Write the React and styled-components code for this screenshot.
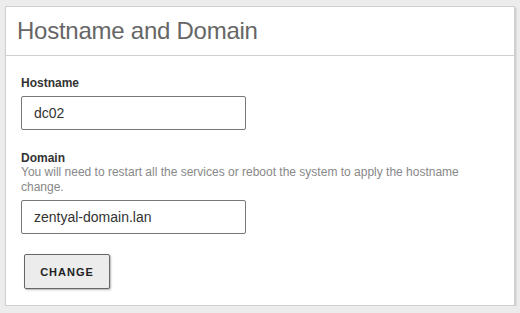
import React from 'react';
import styled, { createGlobalStyle } from 'styled-components';

const GlobalStyle = createGlobalStyle`
  html, body {
    margin: 0;
    padding: 0;
    background: #ececec;
    font-family: "Liberation Sans", Arial, sans-serif;
  }
`;

const Page = styled.div`
  padding: 6px 5px 0 5px;
`;

const Panel = styled.section`
  background: #fff;
  border: 1px solid #cfcfcf;
  box-shadow: 1px 2px 2px rgba(0, 0, 0, 0.18);
  width: 508px;
`;

const Header = styled.header`
  height: 48px;
  display: flex;
  align-items: center;
  padding: 0 11px;
  border-bottom: 1px solid #cfcfcf;
`;

const Title = styled.h2`
  margin: 0;
  font-weight: 400;
  font-size: 24px;
  letter-spacing: -0.25px;
  color: #666;
`;

const Body = styled.div`
  padding: 20px 15px 16px;
  display: flex;
  flex-direction: column;
`;

const Field = styled.div`
  display: flex;
  flex-direction: column;
  margin-bottom: ${({ $gap }) => $gap}px;
`;

const Label = styled.label`
  font-size: 12px;
  font-weight: 700;
  color: #333;
  line-height: 14px;
`;

const Help = styled.p`
  margin: 0;
  font-size: 12px;
  color: #888;
  line-height: 15px;
  max-width: 460px;
`;

const Input = styled.input`
  box-sizing: border-box;
  width: 225px;
  height: 34px;
  margin-top: ${({ $top }) => $top}px;
  border: 1px solid #777;
  border-radius: 2px;
  padding: 0 12px;
  font-family: inherit;
  font-size: 14px;
  color: #333;
  outline: none;
`;

const Button = styled.button`
  align-self: flex-start;
  margin-left: 3px;
  width: 86px;
  height: 35px;
  background: #ececec;
  border: 1px solid #666;
  border-radius: 2px;
  box-shadow: 1px 1px 2px rgba(0, 0, 0, 0.3);
  font-family: inherit;
  font-size: 11px;
  font-weight: 700;
  letter-spacing: 1px;
  color: #222;
  cursor: pointer;
`;

export default function App() {
  return (
    <>
      <GlobalStyle />
      <Page>
        <Panel>
          <Header>
            <Title>Hostname and Domain</Title>
          </Header>
          <Body>
            <Field $gap={21}>
              <Label>Hostname</Label>
              <Input $top={6} defaultValue="dc02" />
            </Field>
            <Field $gap={20}>
              <Label>Domain</Label>
              <Help>
                You will need to restart all the services or reboot the system to apply the hostname change.
              </Help>
              <Input $top={5} defaultValue="zentyal-domain.lan" />
            </Field>
            <Button>CHANGE</Button>
          </Body>
        </Panel>
      </Page>
    </>
  );
}
